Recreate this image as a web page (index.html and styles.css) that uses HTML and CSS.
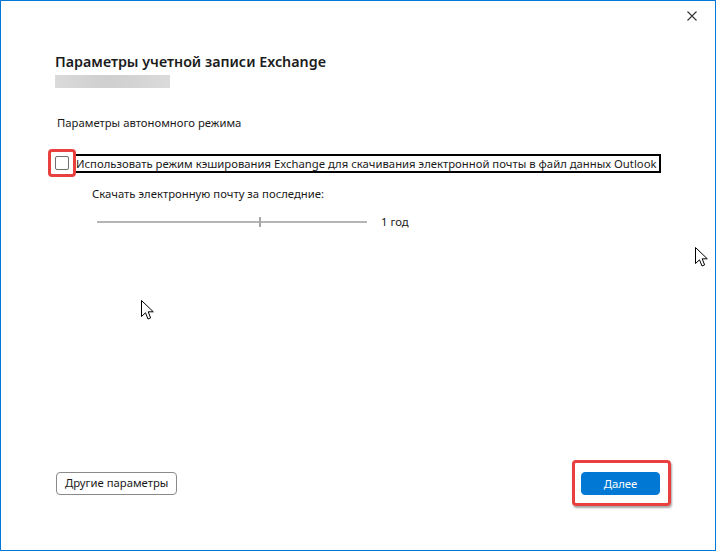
FILE: index.html
```html
<!DOCTYPE html>
<html lang="ru">
<head>
    <meta charset="UTF-8">
    <title>Параметры учетной записи Exchange</title>
    <link rel="stylesheet" href="styles.css">
</head>
<body>
    <div class="window">
        <div class="titlebar">
            <button class="close" title="Закрыть">
                <svg width="10" height="10" viewBox="0 0 10 10"><path d="M0.5 0.5 L9.5 9.5 M9.5 0.5 L0.5 9.5" stroke="#333" stroke-width="1.1" fill="none"/></svg>
            </button>
        </div>
        <div class="content">
            <h1>Параметры учетной записи Exchange</h1>
            <div class="redacted"></div>
            <p class="section">Параметры автономного режима</p>
            <div class="check-row">
                <span class="mark"><span class="checkbox"></span></span>
                <label class="focus">Использовать режим кэширования Exchange для скачивания электронной почты в файл данных Outlook</label>
            </div>
            <p class="sub">Скачать электронную почту за последние:</p>
            <div class="slider-row">
                <div class="slider">
                    <div class="track"></div>
                    <div class="tick" style="left: 60%"></div>
                </div>
                <span class="value">1 год</span>
            </div>
        </div>
        <div class="footer">
            <button class="btn">Другие параметры</button>
            <span class="mark-btn"><button class="btn primary">Далее</button></span>
        </div>

        <svg class="cursor c1" width="14" height="21" viewBox="0 0 14 21"><path d="M0.5 0.5 L0.5 16.5 L4.5 12.8 L7 19 L9.6 17.9 L7.2 11.8 L12.3 11.8 Z" fill="#fff" stroke="#000" stroke-width="1"/></svg>
        <svg class="cursor c2" width="14" height="21" viewBox="0 0 14 21"><path d="M0.5 0.5 L0.5 16.5 L4.5 12.8 L7 19 L9.6 17.9 L7.2 11.8 L12.3 11.8 Z" fill="#fff" stroke="#000" stroke-width="1"/></svg>
    </div>
</body>
</html>
```

FILE: styles.css
```css
* {
    box-sizing: border-box;
}
body {
    margin: 0;
    font-family: "Noto Sans", "Liberation Sans", sans-serif;
    font-size: 11.3px;
    color: #1a1a1a;
    background: #fff;
}
.window {
    position: relative;
    width: 716px;
    height: 551px;
    border: 1px solid #0078d7;
    display: flex;
    flex-direction: column;
    overflow: hidden;
}
.titlebar {
    display: flex;
    justify-content: flex-end;
    padding: 10px 18px 0 0;
}
.close {
    background: none;
    border: none;
    padding: 0;
    width: 10px;
    height: 10px;
    display: flex;
}
.content {
    padding: 0 54px;
}
h1 {
    margin: 31px 0 0;
    font-size: 14.3px;
    line-height: 20px;
    font-weight: 600;
    color: #1b1b1b;
}
.redacted {
    margin-top: 3px;
    width: 115px;
    height: 13px;
    background: linear-gradient(to right, #dadada, #cfcfcf 45%, #d4d4d4 70%, #dbdbdb);
}
.section {
    margin: 27px 0 0 2px;
    line-height: 16px;
}
.check-row {
    display: flex;
    align-items: center;
    margin: 18px 0 0 -7px;
}
.mark {
    border: 3px solid #e8403f;
    border-radius: 4px;
    padding: 4px;
    display: flex;
    position: relative;
    z-index: 1;
}
.checkbox {
    width: 14px;
    height: 14px;
    border: 1px solid #6e6e6e;
    border-radius: 2px;
    background: #fff;
}
.focus {
    margin-left: -2px;
    border: 2px solid #000;
    padding: 0 2px 0 0;
    line-height: 15px;
    white-space: nowrap;
}
.sub {
    margin: 9px 0 0 37px;
    line-height: 16px;
}
.slider-row {
    display: flex;
    align-items: center;
    margin: 12px 0 0 42px;
}
.slider {
    position: relative;
    width: 270px;
    height: 12px;
}
.track {
    position: absolute;
    left: 0;
    right: 0;
    top: 5px;
    height: 2px;
    background: #b5b5b5;
}
.tick {
    position: absolute;
    top: 1px;
    width: 2px;
    height: 10px;
    background: #a8a8a8;
}
.value {
    margin-left: 14px;
    line-height: 16px;
}
.footer {
    margin-top: auto;
    display: flex;
    justify-content: space-between;
    align-items: center;
    padding: 0 44px 44px 55px;
}
.btn {
    font-family: inherit;
    font-size: 11.3px;
    color: #1a1a1a;
    background: #fff;
    border: 1px solid #8a8a8a;
    border-radius: 4px;
    height: 23px;
    padding: 0 8px;
    line-height: 20px;
}
.primary {
    width: 79px;
    background: #0078d4;
    border-color: #0078d4;
    color: #fff;
}
.mark-btn {
    display: flex;
    border: 3px solid #e8403f;
    border-radius: 4px;
    padding: 9px 8px 8px 6px;
    box-shadow: 1px 2px 2px rgba(0, 0, 0, 0.35);
}
.cursor {
    position: absolute;
}
.c1 {
    left: 140px;
    top: 299px;
}
.c2 {
    left: 694px;
    top: 246px;
}
```
